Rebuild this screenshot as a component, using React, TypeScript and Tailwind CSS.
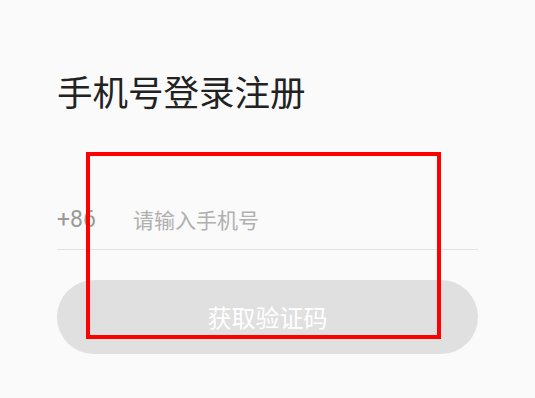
import React from "react";

export default function App() {
  return (
    <div
      className="relative w-[535px] h-[398px] bg-[#fafafa] overflow-hidden"
      style={{ fontFamily: '"Noto Sans CJK SC", "Noto Sans", sans-serif' }}
    >
      <div className="pl-[57px] pr-[57px] pt-[67px]">
        <h1 className="text-[35.5px] leading-[48px] text-[#222222] font-normal">手机号登录注册</h1>
        <div className="mt-[83px] flex items-center h-[52px] pb-[7px] border-b border-[#e3e3e3]">
          <span
            className="text-[23px] text-[#9a9a9a] w-[76px]"
            style={{ fontFamily: 'Roboto, "Noto Sans", sans-serif' }}
          >
            +86
          </span>
          <span className="text-[21px] text-[#b0b0b0]">请输入手机号</span>
        </div>
        <button className="mt-[30px] w-full h-[74px] rounded-full bg-[#e0e0e0] text-white text-[24px] flex items-center justify-center">
          获取验证码
        </button>
      </div>
      <div className="absolute left-[86px] top-[152px] w-[355px] h-[187px] border-4 border-[#ff0000] pointer-events-none" />
    </div>
  );
}
